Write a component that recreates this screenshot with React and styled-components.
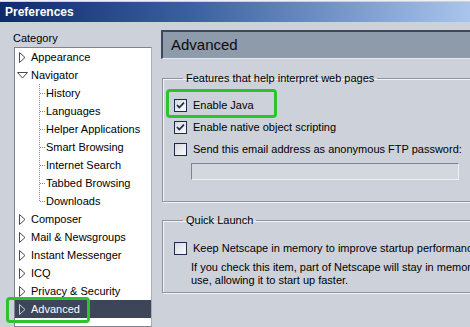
import React from "react";
import styled, { createGlobalStyle } from "styled-components";

const GlobalStyle = createGlobalStyle`
  html, body {
    margin: 0;
    padding: 0;
    overflow: hidden;
    background: #cdd2da;
  }
`;

const Window = styled.div`
  width: 470px;
  height: 327px;
  overflow: hidden;
  padding-top: 1px;
  box-sizing: border-box;
  display: flex;
  flex-direction: column;
  background: #cdd2da;
  border-top: 1px solid #eef0f3;
  font-family: "Liberation Sans", Arial, sans-serif;
  font-size: 11px;
  color: #000;
`;

const TitleBar = styled.div`
  height: 20px;
  line-height: 20px;
  padding-left: 5px;
  flex-shrink: 0;
  background: linear-gradient(to right, #0f2a6c 0%, #3a5f9f 40%, #a9c5ec 100%);
  color: #fff;
  font-weight: bold;
  font-size: 12px;
`;

const Body = styled.div`
  flex: 1;
  display: flex;
  min-height: 0;
`;

const Sidebar = styled.div`
  width: 152px;
  flex-shrink: 0;
  padding: 9px 0 0 14px;
  box-sizing: border-box;
  display: flex;
  flex-direction: column;
`;

const CategoryLabel = styled.div`
  line-height: 14px;
  margin: 0 0 2px -1px;
`;

const Tree = styled.div`
  flex: 1;
  background: #fff;
  border: 1px solid #7f8590;
  border-right-color: #a9adb5;
`;

const Row = styled.div`
  position: relative;
  height: 18px;
  display: flex;
  align-items: center;
  white-space: nowrap;
  background: ${(p) => (p.$selected ? "#3d4558" : "transparent")};
  color: ${(p) => (p.$selected ? "#fff" : "#000")};

  ${(p) =>
    p.$marked &&
    `
    &::after {
      content: "";
      position: absolute;
      left: -9px;
      top: -3px;
      width: 84px;
      height: 26px;
      box-sizing: border-box;
      border: 3px solid #2cc42c;
      border-radius: 4px;
    }
  `}
`;

const Expander = styled.span`
  width: 15px;
  display: inline-flex;
  justify-content: center;
  align-items: center;
  margin-right: 1px;
`;

const Children = styled.div`
  position: relative;

  &::before {
    content: "";
    position: absolute;
    left: 24px;
    top: 0;
    bottom: 9px;
    border-left: 1px dotted #8a8a8a;
  }
`;

const ChildRow = styled.div`
  position: relative;
  height: 18px;
  line-height: 18px;
  padding-left: 31px;
  white-space: nowrap;

  &::before {
    content: "";
    position: absolute;
    left: 25px;
    width: 5px;
    top: 9px;
    border-top: 1px dotted #8a8a8a;
  }
`;

const Main = styled.div`
  width: 330px;
  flex-shrink: 0;
  margin-left: 9px;
  padding-top: 8px;
`;

const PanelHeader = styled.div`
  height: 29px;
  box-sizing: border-box;
  border-top: 2px solid #3f4859;
  border-left: 2px solid #3f4859;
  border-bottom: 1px solid #e6e9ee;
  background: #8e9bab;
  padding-left: 8px;
  font-size: 15px;
  line-height: 26px;
  color: #0c0c0c;
`;

const Group = styled.fieldset`
  margin: ${(p) => p.$gap}px 0 0 1px;
  padding: ${(p) => p.$top}px 0 ${(p) => p.$bottom}px 11px;
  border: 1px solid #8e939c;
  box-shadow: inset 1px 1px 0 #f2f4f7, 1px 1px 0 #f2f4f7;
  min-width: 0;
`;

const Legend = styled.legend`
  margin-left: 9px;
  padding: 0 3px;
  line-height: 14px;
`;

const CheckRow = styled.div`
  position: relative;
  height: 22px;
  display: flex;
  align-items: center;
  gap: 6px;
  white-space: nowrap;

  ${(p) =>
    p.$marked &&
    `
    &::after {
      content: "";
      position: absolute;
      left: -8px;
      top: -5px;
      width: 111px;
      height: 29px;
      box-sizing: border-box;
      border: 3px solid #2cc42c;
      border-radius: 4px;
    }
  `}
`;

const Box = styled.span`
  width: 13px;
  height: 13px;
  box-sizing: border-box;
  flex-shrink: 0;
  border: 1px solid #1d2b4c;
  background: linear-gradient(135deg, #d6d9df, #fafbfc);
  display: inline-flex;
  align-items: center;
  justify-content: center;
`;

const TextField = styled.div`
  margin: 3px 0 0 17px;
  width: 268px;
  height: 17px;
  box-sizing: border-box;
  border: 1px solid #7c8494;
  border-right-color: #eef0f3;
  border-bottom-color: #eef0f3;
  background: #d3d7de;
`;

const Note = styled.p`
  margin: 2px 0 0 17px;
  line-height: 13px;
  white-space: nowrap;
`;

function Triangle({ open, selected }) {
  const stroke = selected ? "#c9ced8" : "#4a4a4a";
  const fill = selected ? "#3d4558" : "#fff";
  if (open) {
    return (
      <svg width="11" height="7" viewBox="0 0 11 7">
        <polygon points="0.5,0.5 10.5,0.5 5.5,6" fill={fill} stroke={stroke} />
      </svg>
    );
  }
  return (
    <svg width="7" height="11" viewBox="0 0 7 11">
      <polygon points="0.5,0.5 6,5.5 0.5,10.5" fill={fill} stroke={stroke} />
    </svg>
  );
}

function Checkbox({ checked }) {
  return (
    <Box>
      {checked && (
        <svg width="11" height="11" viewBox="0 0 11 11">
          <path d="M2 5 L4.3 7.6 L9 2.6" fill="none" stroke="#1e2c48" strokeWidth="1.7" />
        </svg>
      )}
    </Box>
  );
}

const categories = [
  { label: "Appearance" },
  {
    label: "Navigator",
    children: [
      "History",
      "Languages",
      "Helper Applications",
      "Smart Browsing",
      "Internet Search",
      "Tabbed Browsing",
      "Downloads",
    ],
  },
  { label: "Composer" },
  { label: "Mail & Newsgroups" },
  { label: "Instant Messenger" },
  { label: "ICQ" },
  { label: "Privacy & Security" },
  { label: "Advanced", selected: true },
];

export default function App() {
  return (
    <>
      <GlobalStyle />
      <Window>
        <TitleBar>Preferences</TitleBar>
        <Body>
          <Sidebar>
            <CategoryLabel>Category</CategoryLabel>
            <Tree>
              {categories.map((c) => (
                <React.Fragment key={c.label}>
                  <Row $selected={c.selected} $marked={c.selected}>
                    <Expander>
                      <Triangle open={!!c.children} selected={c.selected} />
                    </Expander>
                    {c.label}
                  </Row>
                  {c.children && (
                    <Children>
                      {c.children.map((ch) => (
                        <ChildRow key={ch}>{ch}</ChildRow>
                      ))}
                    </Children>
                  )}
                </React.Fragment>
              ))}
            </Tree>
          </Sidebar>
          <Main>
            <PanelHeader>Advanced</PanelHeader>
            <Group $gap={12} $top={9} $bottom={21}>
              <Legend>Features that help interpret web pages</Legend>
              <CheckRow $marked>
                <Checkbox checked />
                Enable Java
              </CheckRow>
              <CheckRow>
                <Checkbox checked />
                Enable native object scripting
              </CheckRow>
              <CheckRow>
                <Checkbox />
                Send this email address as anonymous FTP password:
              </CheckRow>
              <TextField />
            </Group>
            <Group $gap={11} $top={10} $bottom={5}>
              <Legend>Quick Launch</Legend>
              <CheckRow>
                <Checkbox />
                Keep Netscape in memory to improve startup performance
              </CheckRow>
              <Note>
                If you check this item, part of Netscape will stay in memory when not in
                <br />
                use, allowing it to start up faster.
              </Note>
            </Group>
          </Main>
        </Body>
      </Window>
    </>
  );
}
